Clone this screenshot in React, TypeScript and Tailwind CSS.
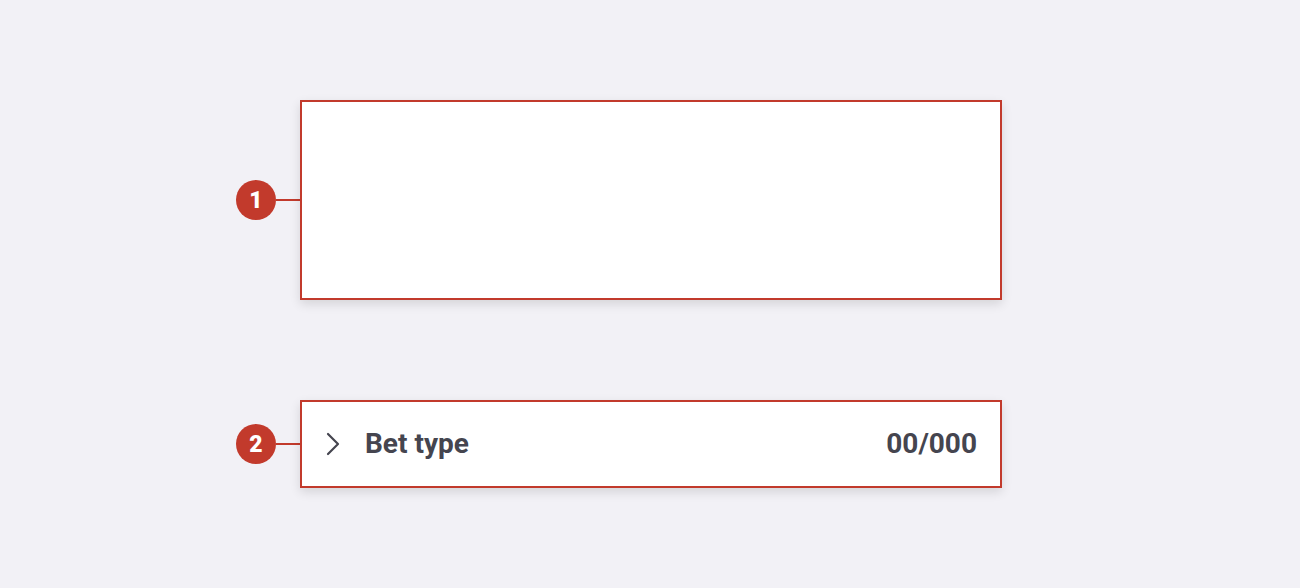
import React from "react";

function Marker({ n }: { n: number }) {
  return (
    <div className="flex items-center">
      <div className="w-10 h-10 rounded-full bg-[#c23a2c] text-white flex items-center justify-center text-[23px] font-black leading-none">
        {n}
      </div>
      <div className="w-6 h-[2px] bg-[#c23a2c]" />
    </div>
  );
}

export default function App() {
  return (
    <div
      className="w-[1300px] h-[588px] bg-[#f2f1f6] pt-[100px] pl-[236px] flex flex-col gap-[100px]"
      style={{ fontFamily: "Roboto, 'Liberation Sans', sans-serif" }}
    >
      {/* Empty card */}
      <div className="flex items-center">
        <Marker n={1} />
        <div className="w-[702px] h-[200px] bg-white border-2 border-[#c23a2c] shadow-[0_4px_10px_rgba(0,0,0,0.12)]" />
      </div>

      {/* Collapsed row */}
      <div className="flex items-center">
        <Marker n={2} />
        <div className="w-[702px] h-[88px] bg-white border-2 border-[#c23a2c] shadow-[0_4px_10px_rgba(0,0,0,0.12)] flex items-center pl-6 pr-[23px] text-[#45454f]">
          <svg width="14" height="24" viewBox="0 0 14 24" fill="none" className="shrink-0">
            <path d="M2 2l10 10-10 10" stroke="#45454f" strokeWidth="2.2" strokeLinecap="round" strokeLinejoin="round" />
          </svg>
          <span className="ml-[25px] text-[28px] font-bold leading-none">Bet type</span>
          <span className="ml-auto text-[28px] font-bold leading-none">00/000</span>
        </div>
      </div>
    </div>
  );
}
